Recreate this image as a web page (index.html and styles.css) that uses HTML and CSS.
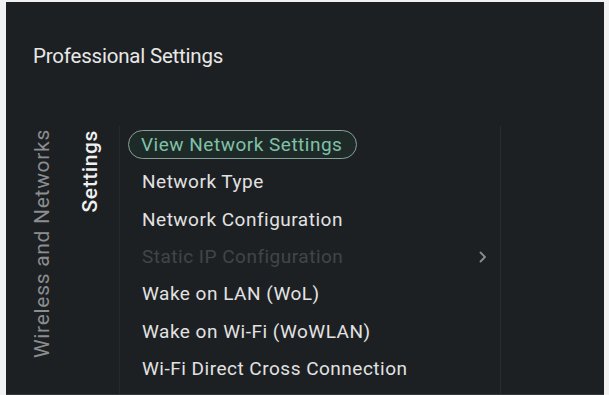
FILE: index.html
```html
<!DOCTYPE html>
<html lang="en">
<head>
    <meta charset="UTF-8">
    <meta name="viewport" content="width=device-width, initial-scale=1.0">
    <title>Professional Settings</title>
    <link rel="stylesheet" href="styles.css">
</head>
<body>
    <div class="screen">
        <h1 class="title">Professional Settings</h1>
        <div class="menu">
            <div class="crumb crumb-parent"><span>Wireless and Networks</span></div>
            <div class="crumb crumb-current"><span>Settings</span></div>
            <ul class="items">
                <li class="item selected"><span class="pill">View Network Settings</span></li>
                <li class="item">Network Type</li>
                <li class="item">Network Configuration</li>
                <li class="item disabled">Static IP Configuration
                    <svg class="chevron" width="8" height="12" viewBox="0 0 8 12"><polyline points="1.5,1.5 6,6 1.5,10.5" fill="none" stroke="#8a8c8e" stroke-width="1.8" stroke-linecap="round" stroke-linejoin="round"/></svg>
                </li>
                <li class="item">Wake on LAN (WoL)</li>
                <li class="item">Wake on Wi-Fi (WoWLAN)</li>
                <li class="item">Wi-Fi Direct Cross Connection</li>
            </ul>
            <div class="side"></div>
        </div>
    </div>
</body>
</html>
```

FILE: styles.css
```css
body {
    margin: 0;
    background-color: #f2f2f2;
    font-family: Roboto, "Liberation Sans", sans-serif;
    height: 395px;
    overflow: hidden;
}
.screen {
    margin: 2px 5px 0 6px;
    height: 393px;
    background-color: #1d2023;
    display: flex;
    flex-direction: column;
    box-sizing: border-box;
    border-bottom: 1px solid #34383b;
}
.title {
    margin: 0;
    padding: 42px 0 0 27px;
    height: 78px;
    box-sizing: border-box;
    font-size: 20.5px;
    font-weight: 400;
    color: #e8e8e8;
    letter-spacing: -0.2px;
}
.menu {
    flex: 1;
    display: flex;
    padding-top: 46px;
}
.crumb {
    display: flex;
    align-items: flex-start;
}
.crumb span {
    writing-mode: vertical-rl;
    transform: rotate(180deg);
    white-space: nowrap;
}
.crumb-parent {
    width: 72px;
    justify-content: center;
    padding-top: 3px;
}
.crumb-parent span {
    color: #8b8d8f;
    font-size: 21px;
    letter-spacing: 0.7px;
}
.crumb-current {
    width: 42px;
    box-sizing: border-box;
    padding-top: 4px;
    border-right: 1px solid #26292c;
}
.crumb-current span {
    color: #f0f0f0;
    font-weight: 500;
    font-size: 21px;
    letter-spacing: 0.6px;
}
.items {
    list-style: none;
    margin: 0;
    padding: 0 0 0 8px;
    width: 381px;
    border-right: 1px solid #2a2d30;
    box-sizing: border-box;
}
.item {
    height: 37.3px;
    display: flex;
    align-items: center;
    padding-left: 14px;
    font-size: 19px;
    letter-spacing: 0.5px;
    color: #e2e2e2;
    white-space: nowrap;
    position: relative;
}
.item.selected {
    padding-left: 0;
}
.pill {
    display: inline-block;
    height: 27px;
    line-height: 27px;
    padding: 0 14px 0 12px;
    border: 1.5px solid #8a9f98;
    border-radius: 15px;
    background-color: #1e2a27;
    color: #80c1a8;
}
.item.disabled {
    color: #424548;
}
.chevron {
    position: absolute;
    right: 13px;
    top: 13px;
}
.side {
    flex: 1;
}
```
